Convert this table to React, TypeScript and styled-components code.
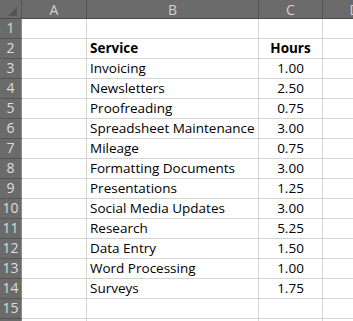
import React from "react";
import styled, { createGlobalStyle } from "styled-components";

const Global = createGlobalStyle`
  html, body { margin: 0; padding: 0; background: #ffffff; overflow: hidden; }
  body { font-family: "Open Sans", "Liberation Sans", sans-serif; }
`;

const Sheet = styled.div`
  display: grid;
  grid-template-columns: 22px 65px 172px 64px 64px;
  grid-template-rows: 19px repeat(16, 20px);
  width: 387px;
`;

const Corner = styled.div`
  background: #6b6b6b;
  border-right: 1px solid #555555;
  border-bottom: 1px solid #4a4a4a;
  box-sizing: border-box;
  display: flex;
  align-items: flex-end;
  justify-content: flex-end;
  padding: 0 4px 2px 0;
`;

const ColHead = styled.div`
  background: #6b6b6b;
  color: #d2d2d2;
  border-right: 1px solid #555555;
  border-bottom: 1px solid #4a4a4a;
  box-sizing: border-box;
  display: flex;
  align-items: center;
  justify-content: center;
  font-size: 14px;
  line-height: 1;
  padding-top: 1px;
`;

const RowHead = styled.div`
  background: #6b6b6b;
  color: #dedede;
  border-right: 1px solid #8a8a8a;
  border-bottom: 1px solid #555555;
  box-sizing: border-box;
  display: flex;
  align-items: flex-end;
  justify-content: center;
  font-size: 14px;
  line-height: 1;
  padding-bottom: 3px;
`;

const Cell = styled.div<{ $align?: "left" | "center"; $bold?: boolean }>`
  border-right: 1px solid #d4d4d4;
  border-bottom: 1px solid #d4d4d4;
  box-sizing: border-box;
  display: flex;
  align-items: flex-end;
  justify-content: ${(p) => (p.$align === "center" ? "center" : "flex-start")};
  padding: 0 3px 3px 3px;
  font-size: 13.5px;
  line-height: 1;
  color: #000000;
  font-weight: ${(p) => (p.$bold ? 700 : 400)};
  white-space: nowrap;
  overflow: visible;
`;

const rows: [string, string][] = [
  ["Invoicing", "1.00"],
  ["Newsletters", "2.50"],
  ["Proofreading", "0.75"],
  ["Spreadsheet Maintenance", "3.00"],
  ["Mileage", "0.75"],
  ["Formatting Documents", "3.00"],
  ["Presentations", "1.25"],
  ["Social Media Updates", "3.00"],
  ["Research", "5.25"],
  ["Data Entry", "1.50"],
  ["Word Processing", "1.00"],
  ["Surveys", "1.75"],
];

export default function App() {
  const body: React.ReactNode[] = [];
  const addRow = (n: number, b: string, c: string, bold = false) => {
    body.push(
      <RowHead key={`h${n}`}>{n}</RowHead>,
      <Cell key={`a${n}`} />,
      <Cell key={`b${n}`} $bold={bold}>{b}</Cell>,
      <Cell key={`c${n}`} $align="center" $bold={bold}>{c}</Cell>,
      <Cell key={`d${n}`} />
    );
  };
  addRow(1, "", "");
  addRow(2, "Service", "Hours", true);
  rows.forEach(([s, h], i) => addRow(i + 3, s, h));
  addRow(15, "", "");
  addRow(16, "", "");
  return (
    <>
      <Global />
      <Sheet>
        <Corner>
          <svg width="9" height="9" viewBox="0 0 9 9">
            <polygon points="9,0 9,9 0,9" fill="#555555" />
          </svg>
        </Corner>
        <ColHead>A</ColHead>
        <ColHead>B</ColHead>
        <ColHead>C</ColHead>
        <ColHead>D</ColHead>
        {body}
      </Sheet>
    </>
  );
}
